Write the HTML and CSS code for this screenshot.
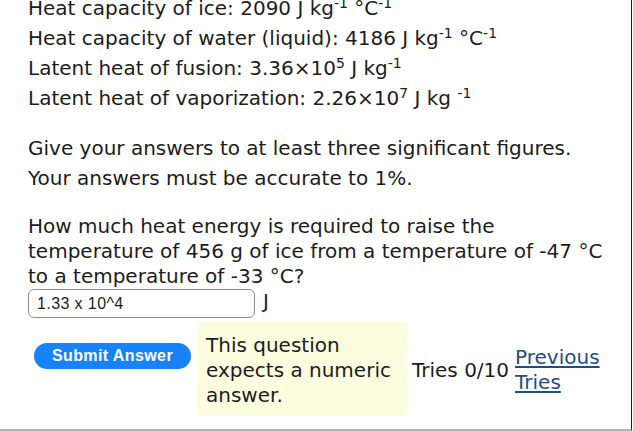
FILE: index.html
```html
<!DOCTYPE html>
<html lang="en">
<head>
<meta charset="utf-8">
<title>Heat energy question</title>
<link rel="stylesheet" href="styles.css">
</head>
<body>
<div class="page">
  <div class="content">
    <p class="given">Heat capacity of ice: 2090 J kg<sup>-1</sup> °C<sup>-1</sup><br>Heat capacity of water (liquid): 4186 J kg<sup>-1</sup> °C<sup>-1</sup><br>Latent heat of fusion: 3.36×10<sup>5</sup> J kg<sup>-1</sup><br>Latent heat of vaporization: 2.26×10<sup>7</sup> J kg <sup>-1</sup></p>
    <p class="instr">Give your answers to at least three significant figures.<br>Your answers must be accurate to 1%.</p>
    <p class="question">How much heat energy is required to raise the<br>temperature of 456 g of ice from a temperature of -47 °C<br>to a temperature of -33 °C?</p>
    <div class="answer-row">
      <input class="answer" type="text" value="1.33 x 10^4">
      <span class="unit">J</span>
    </div>
    <div class="submit-row">
      <button class="submit" type="button">Submit Answer</button>
      <div class="hint">This question<br>expects a numeric<br>answer.</div>
      <span class="tries">Tries 0/10</span>
      <a class="prev" href="#">Previous<br>Tries</a>
    </div>
  </div>
</div>
</body>
</html>
```

FILE: styles.css
```css
html, body {
  margin: 0;
  padding: 0;
  background: #ffffff;
}
body {
  overflow: hidden;
}
.page {
  width: 631px;
  height: 429px;
  border-right: 1px solid #1e1e1e;
  border-bottom: 2px solid #b4b4b4;
  overflow: hidden;
  font-family: "DejaVu Sans", Verdana, sans-serif;
  font-size: 20px;
  color: #1c1c1c;
}
.content {
  margin-top: -7px;
  padding-left: 28px;
}
p {
  margin: 0;
  white-space: nowrap;
}
.given {
  line-height: 30px;
}
.instr {
  line-height: 30px;
  margin-top: 20px;
}
.question {
  line-height: 25px;
  margin-top: 21px;
}
sup {
  font-size: 14px;
  line-height: 0;
  vertical-align: 7px;
}
.answer-row {
  display: flex;
  align-items: flex-start;
  gap: 8px;
}
.answer {
  box-sizing: border-box;
  width: 227px;
  height: 29px;
  border: 1px solid #8e8e8e;
  border-radius: 6px;
  padding: 0 8px;
  font-family: "Liberation Sans", Arial, sans-serif;
  font-size: 16px;
  letter-spacing: 0.4px;
  color: #1c1c1c;
  background: #fff;
  outline: none;
}
.unit {
  line-height: 25px;
}
.submit-row {
  display: flex;
  align-items: flex-start;
  margin-top: 4px;
}
.submit {
  margin: 21px 0 0 6px;
  width: 157px;
  height: 26px;
  border: none;
  border-radius: 13px;
  background: #1683fb;
  color: #ffffff;
  font-family: "Liberation Sans", Arial, sans-serif;
  font-weight: bold;
  font-size: 16px;
  letter-spacing: 0.4px;
  padding: 0;
}
.hint {
  box-sizing: border-box;
  margin-left: 6px;
  width: 210px;
  padding: 11px 6px 7px 9px;
  background: #fdfde0;
  line-height: 25px;
  white-space: nowrap;
}
.tries {
  margin: 36px 0 0 5px;
  line-height: 25px;
  white-space: nowrap;
}
.prev {
  margin: 23px 0 0 6px;
  line-height: 25px;
  color: #1e4d88;
  text-decoration: underline;
  text-underline-offset: 2px;
}
```
